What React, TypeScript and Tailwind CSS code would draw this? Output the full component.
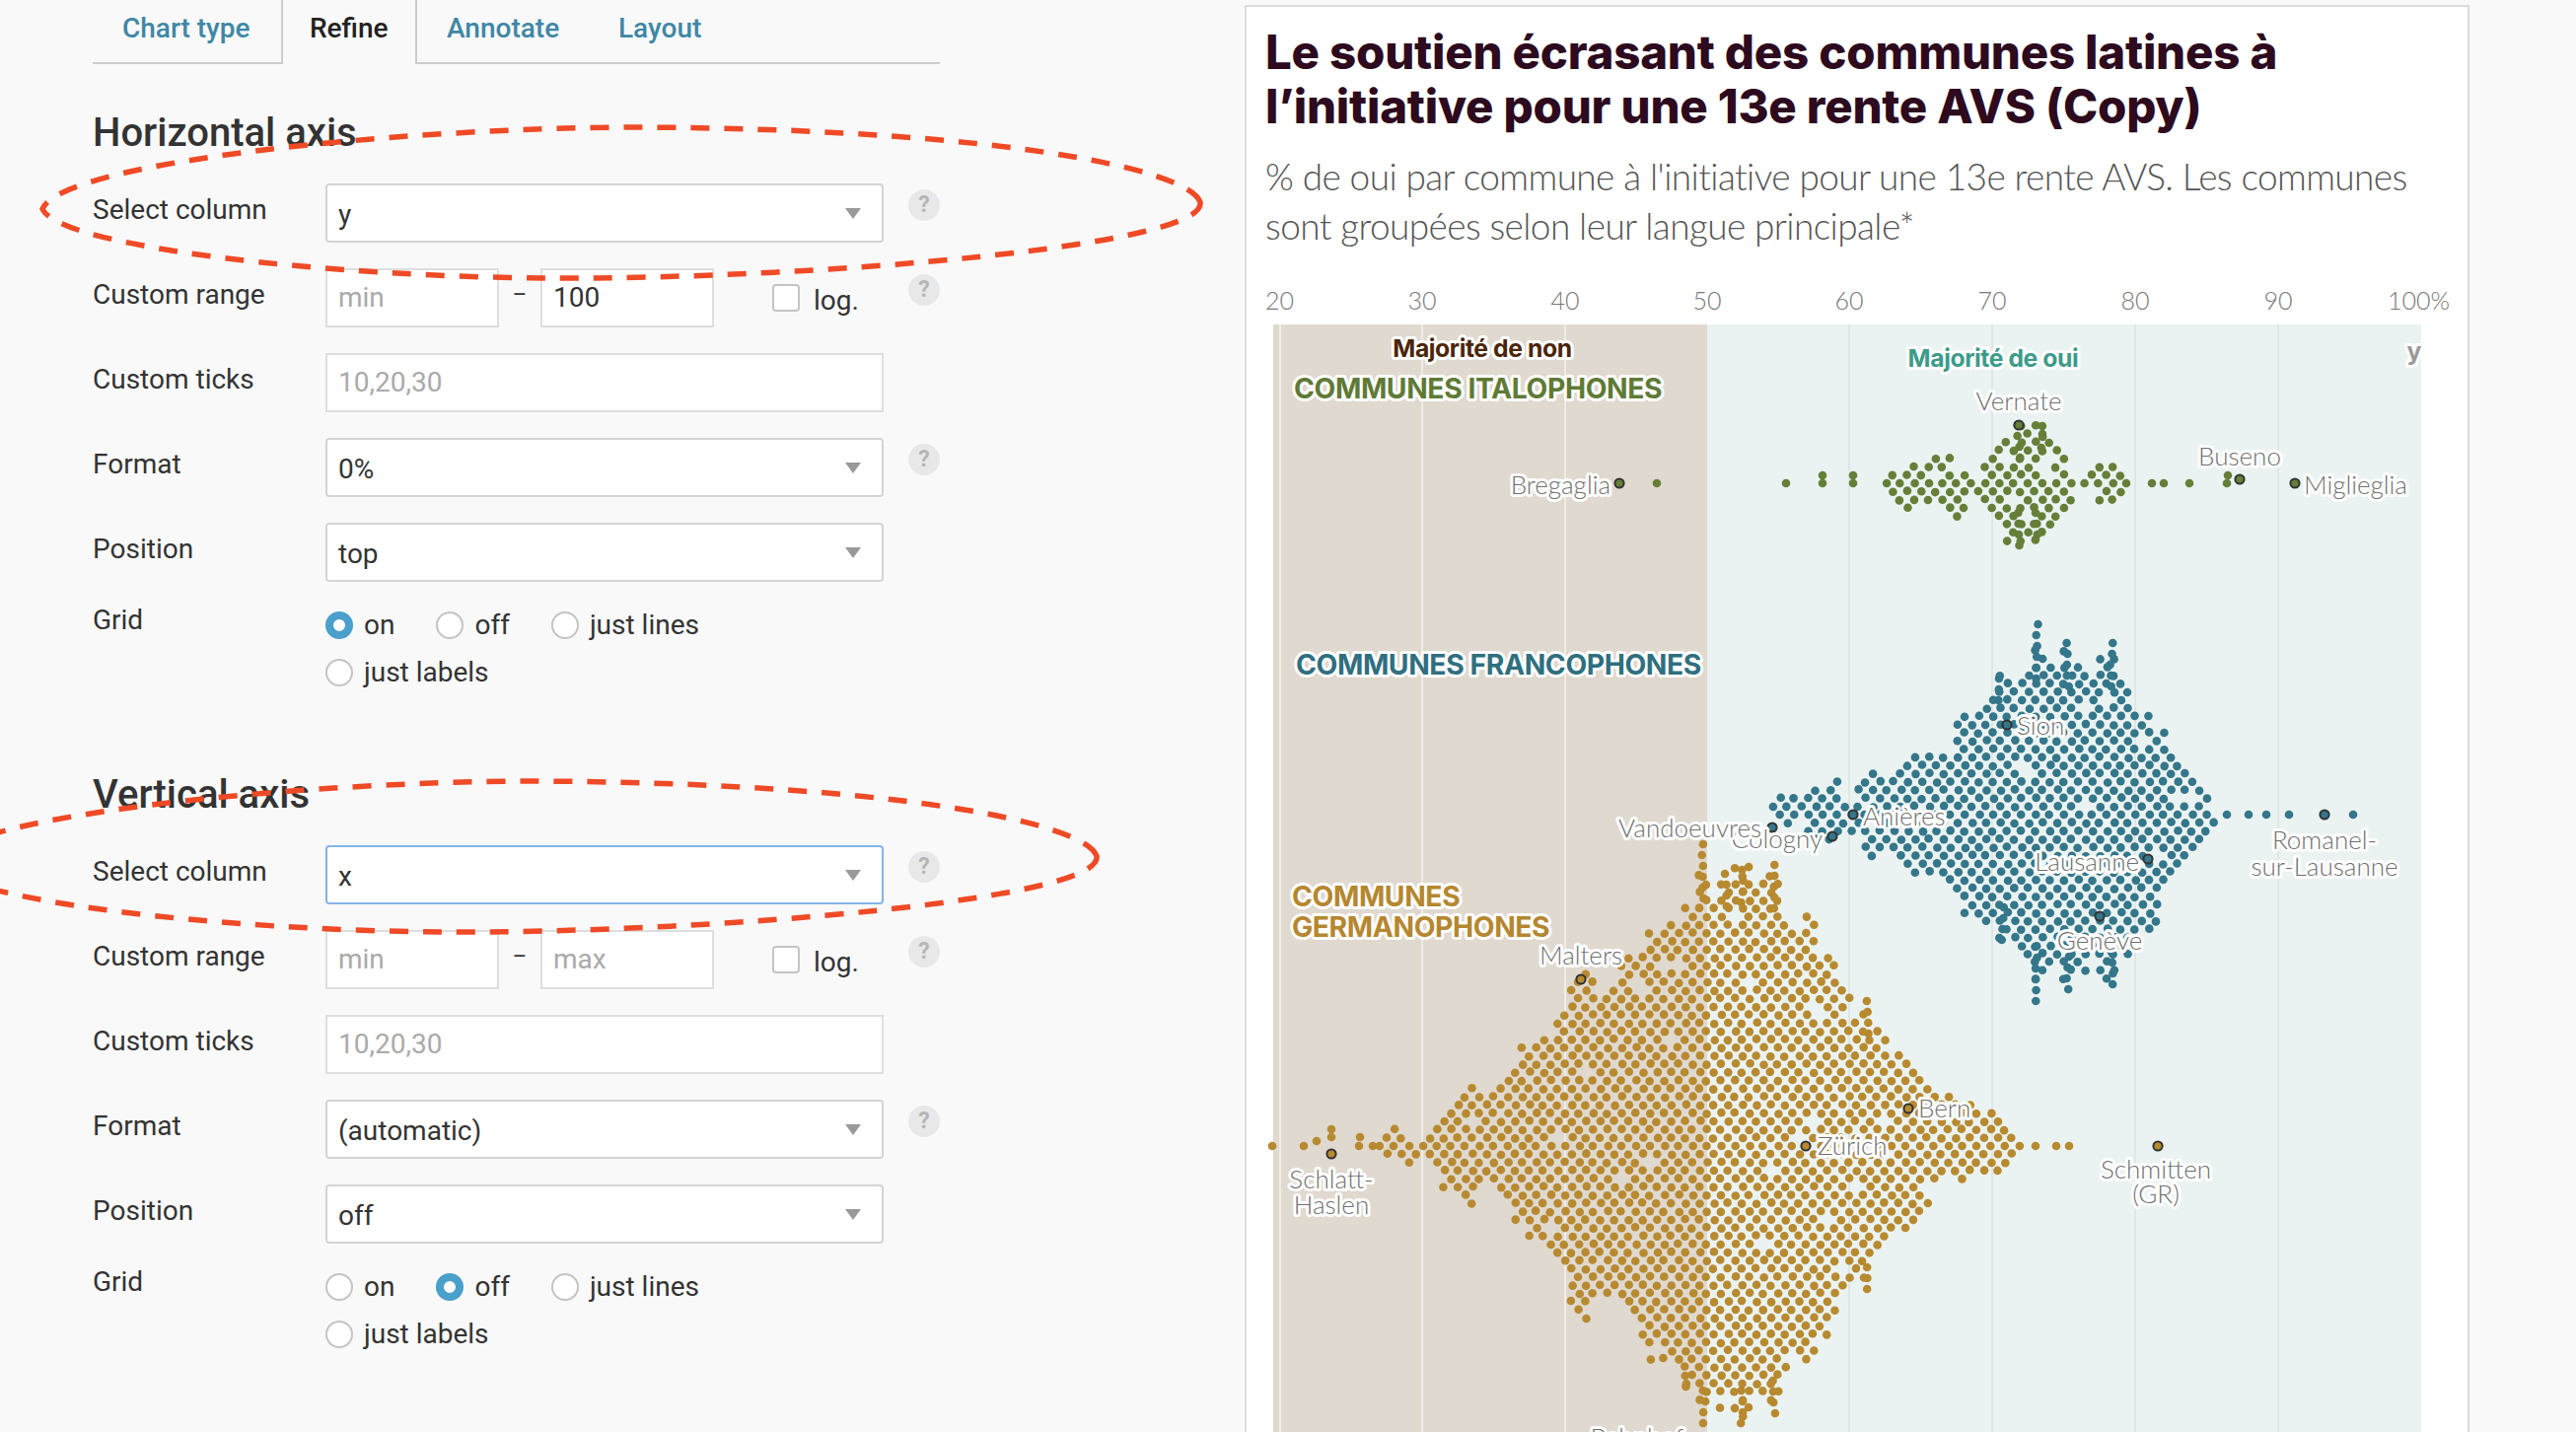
import React from 'react';

const ROW_H = 8.3;
const COL_W = 14.4;

type Pt = [number, number];
type Strand = [number, number, number]; // x, first y, last y
type Group = { cy: number; color: string; top: Pt[]; bottom: Pt[]; singles: Pt[]; strands: Strand[]; drop: number; seed: number };

// silhouette of each swarm, read off the picture: [x, y] along the upper and lower edge
const GROUPS: Group[] = [
  {
    cy: 490, color: '#667f38', seed: 3, drop: 0.12,
    top: [[1908, 490], [1932, 475], [1969, 460], [1989, 465], [1999, 488], [2017, 460], [2037, 450], [2047, 436], [2070, 432], [2089, 451], [2097, 473], [2108, 490], [2121, 473], [2151, 471], [2157, 488]],
    bottom: [[1908, 490], [1928, 516], [1960, 510], [1989, 524], [1999, 492], [2020, 530], [2047, 557], [2065, 545], [2089, 527], [2097, 510], [2108, 490], [2121, 505], [2140, 510], [2157, 492]],
    singles: [[1680, 490], [1811, 490], [1848, 482], [1848, 490], [1879, 482], [1879, 490], [2182, 490], [2194, 490], [2220, 490], [2258, 490], [2259, 482]],
    strands: [[2047, 431, 470], [2070, 432, 462], [2047, 520, 557], [2065, 520, 545]],
  },
  {
    cy: 826, color: '#34768a', seed: 11, drop: 0.02,
    top: [[1796, 826], [1798, 808], [1818, 810], [1840, 800], [1859, 786], [1878, 815], [1896, 776], [1915, 795], [1940, 763], [1965, 770], [1997, 718], [2012, 730], [2027, 688], [2050, 690], [2065, 660], [2080, 680], [2097, 670], [2118, 680], [2141, 670], [2147, 681], [2157, 701], [2172, 730], [2190, 720], [2195, 750], [2211, 778], [2228, 798], [2236, 806], [2248, 826]],
    bottom: [[1796, 826], [1798, 833], [1830, 845], [1859, 860], [1878, 840], [1896, 866], [1915, 860], [1936, 888], [1965, 888], [1980, 900], [1997, 935], [2012, 925], [2031, 945], [2050, 950], [2065, 985], [2080, 970], [2097, 985], [2118, 975], [2141, 985], [2149, 973], [2165, 950], [2188, 936], [2192, 905], [2211, 881], [2220, 860], [2240, 841], [2248, 826]],
    singles: [[2258, 826], [2280, 826], [2298, 826], [2321, 826], [2386, 826]],
    strands: [[2065, 633, 690], [2097, 652, 700], [2141, 652, 700], [2065, 960, 1022], [2097, 970, 1003], [2141, 965, 1003], [2031, 920, 958], [2027, 688, 720]],
  },
  {
    cy: 1162, color: '#b88a30', seed: 23, drop: 0.02,
    top: [[1396, 1162], [1407, 1147], [1422, 1140], [1434, 1155], [1445, 1162], [1459, 1135], [1474, 1117], [1499, 1100], [1518, 1115], [1535, 1070], [1571, 1047], [1587, 1020], [1599, 1000], [1630, 1010], [1669, 947], [1691, 940], [1709, 925], [1727, 900], [1738, 905], [1750, 900], [1766, 900], [1782, 905], [1799, 900], [1810, 925], [1822, 933], [1860, 985], [1880, 1030], [1894, 1040], [1902, 1040], [1917, 1070], [1942, 1078], [1952, 1095], [1977, 1115], [2011, 1123], [2021, 1130], [2041, 1147], [2049, 1155], [2052, 1162]],
    bottom: [[1396, 1162], [1415, 1175], [1428, 1183], [1440, 1170], [1451, 1183], [1469, 1208], [1490, 1221], [1510, 1195], [1531, 1220], [1535, 1246], [1559, 1256], [1571, 1266], [1585, 1276], [1588, 1303], [1601, 1331], [1620, 1308], [1650, 1316], [1654, 1336], [1664, 1351], [1669, 1375], [1692, 1378], [1709, 1400], [1728, 1420], [1745, 1420], [1766, 1420], [1785, 1405], [1799, 1410], [1810, 1390], [1827, 1375], [1858, 1340], [1867, 1305], [1880, 1295], [1894, 1285], [1902, 1270], [1917, 1253], [1941, 1241], [1952, 1236], [1952, 1220], [1969, 1200], [2011, 1191], [2037, 1183], [2043, 1175], [2052, 1162]],
    singles: [[1290, 1162], [1322, 1162], [1335, 1157], [1350, 1145], [1350, 1153], [1378, 1162], [1379, 1153], [1392, 1162], [2064, 1162], [2085, 1162], [2098, 1162]],
    strands: [[1727, 856, 920], [1799, 877, 930], [1766, 882, 920], [1750, 886, 920], [1894, 1015, 1050], [1894, 1285, 1310], [1709, 1395, 1415], [1728, 1410, 1452], [1766, 1410, 1445], [1799, 1400, 1436]],
  },
];

const MARKED: { x: number; y: number; color: string }[] = [
  { x: 2047, y: 431, color: '#667f38' },
  { x: 1642, y: 490, color: '#667f38' },
  { x: 2271, y: 486, color: '#667f38' },
  { x: 2327, y: 490, color: '#667f38' },
  { x: 2035, y: 735, color: '#34768a' },
  { x: 1879, y: 826, color: '#34768a' },
  { x: 1797, y: 839, color: '#34768a' },
  { x: 1858, y: 848, color: '#34768a' },
  { x: 2178, y: 871, color: '#34768a' },
  { x: 2129, y: 929, color: '#34768a' },
  { x: 2357, y: 826, color: '#34768a' },
  { x: 1603, y: 993, color: '#b88a30' },
  { x: 1350, y: 1170, color: '#b88a30' },
  { x: 1935, y: 1124, color: '#b88a30' },
  { x: 1831, y: 1162, color: '#b88a30' },
  { x: 2188, y: 1162, color: '#b88a30' },
];

function edgeAt(points: Pt[], x: number) {
  for (let i = 0; i < points.length - 1; i++) {
    const [x0, y0] = points[i];
    const [x1, y1] = points[i + 1];
    if (x >= x0 && x <= x1) return y0 + ((y1 - y0) * (x - x0)) / (x1 - x0 || 1);
  }
  return null;
}

function noise(a: number, b: number) {
  const v = Math.sin(a * 12.9898 + b * 78.233) * 43758.5453;
  return v - Math.floor(v);
}

function swarmDots(g: Group) {
  const dots: Pt[] = [...g.singles];
  for (let r = -70; r <= 70; r++) {
    const y = g.cy + r * ROW_H;
    const odd = Math.abs(r) % 2 === 1;
    for (let c = 0; c < 70; c++) {
      const x = 1290 + g.seed + (odd ? COL_W / 2 : 0) + c * COL_W;
      const top = edgeAt(g.top, x);
      const bottom = edgeAt(g.bottom, x);
      if (top === null || bottom === null) continue;
      // uneven column heights give the spiky outline
      const reach = 0.96 + 0.14 * noise(c * 2 + (odd ? 1 : 0), g.seed);
      if (y < g.cy - (g.cy - top) * reach - 1 || y > g.cy + (bottom - g.cy) * reach + 1) continue;
      if (r !== 0 && noise(r * 3 + g.seed, c * 7) < g.drop) continue;
      const jx = (noise(r + g.seed, c) - 0.5) * 2;
      const jy = r === 0 ? 0 : (noise(c + g.seed, r) - 0.5) * 1.6;
      dots.push([x + jx, y + jy]);
    }
  }
  g.strands.forEach(([x, y0, y1], s) => {
    for (let y = y0; y <= y1; y += 11) dots.push([x + (noise(y, s) - 0.5) * 3, y]);
  });
  return dots;
}

const TICKS = [
  { label: '30', x: 1442 }, { label: '40', x: 1587 }, { label: '50', x: 1731 }, { label: '60', x: 1875 },
  { label: '70', x: 2020 }, { label: '80', x: 2165 }, { label: '90', x: 2310 },
];

const halo = 'stroke-white [stroke-width:6px] [paint-order:stroke] [stroke-linejoin:round]';
const noteText = `[font-family:Lato,sans-serif] font-light text-[26px] fill-[#6f6f6f] ${halo}`;
const groupText = `[font-family:Inter,sans-serif] font-bold text-[28.3px] tracking-[-0.4px] ${halo}`;
const majorityText = `[font-family:Inter,sans-serif] font-bold text-[24.7px] tracking-[-0.4px] ${halo}`;

function Note({ x, y, anchor = 'middle', children }: { x: number; y: number; anchor?: 'start' | 'middle' | 'end'; children: React.ReactNode }) {
  return <text x={x} y={y + 9} textAnchor={anchor} className={noteText}>{children}</text>;
}

function Swarm() {
  return (
    <svg viewBox="1264 280 1238 1172" className="block w-[1238px] h-[1172px]">
      <rect x={1291} y={329} width={440} height={1130} fill="#e0d9d0" />
      <rect x={1731} y={329} width={724} height={1130} fill="#ebf3f2" />
      {[1298, 1442, 1587].map((x) => <line key={x} x1={x} x2={x} y1={329} y2={1452} stroke="#f0ece6" strokeWidth={2} />)}
      {[1875, 2020, 2165, 2310].map((x) => <line key={x} x1={x} x2={x} y1={329} y2={1452} stroke="#e0e6e6" strokeWidth={2} />)}

      <g className="[font-family:Lato,sans-serif] font-light text-[25px] fill-[#777]">
        <text x={1283} y={314}>20</text>
        {TICKS.map((t) => <text key={t.label} x={t.x} y={314} textAnchor="middle">{t.label}</text>)}
        <text x={2484} y={314} textAnchor="end">100%</text>
      </g>

      {GROUPS.map((g) => (
        <g key={g.cy} fill={g.color}>
          {swarmDots(g).map(([x, y], i) => <circle key={i} cx={x} cy={y} r={4.3} />)}
        </g>
      ))}
      {MARKED.map((m) => <circle key={`${m.x}-${m.y}`} cx={m.x} cy={m.y} r={4.6} fill={m.color} stroke="#333" strokeWidth={2} />)}

      <text x={1503} y={362} textAnchor="middle" className={`${majorityText} fill-[#4b2508]`}>Majorité de non</text>
      <text x={2021} y={372} textAnchor="middle" className={`${majorityText} fill-[#3d9b8a]`}>Majorité de oui</text>
      <text x={2455} y={365} textAnchor="end" className={`${majorityText} fill-[#999]`}>y</text>

      <text x={1312} y={404} className={`${groupText} fill-[#5f7a36]`}>COMMUNES ITALOPHONES</text>
      <text x={1314} y={684} className={`${groupText} fill-[#2f6f80]`}>COMMUNES FRANCOPHONES</text>
      <text x={1310} y={919} className={`${groupText} fill-[#b5872f]`}>COMMUNES</text>
      <text x={1310} y={950} className={`${groupText} fill-[#b5872f]`}>GERMANOPHONES</text>

      <Note x={2047} y={407}>Vernate</Note>
      <Note x={1633} y={492} anchor="end">Bregaglia</Note>
      <Note x={2271} y={463}>Buseno</Note>
      <Note x={2336} y={492} anchor="start">Miglieglia</Note>
      <Note x={2045} y={736} anchor="start">Sion</Note>
      <Note x={1889} y={828} anchor="start">Anières</Note>
      <Note x={1848} y={851} anchor="end">Cologny</Note>
      <Note x={1786} y={840} anchor="end">Vandoeuvres</Note>
      <Note x={2169} y={874} anchor="end">Lausanne</Note>
      <Note x={2129} y={954}>Genève</Note>
      <Note x={2357} y={852}>Romanel-</Note>
      <Note x={2357} y={879}>sur-Lausanne</Note>
      <Note x={1603} y={969}>Malters</Note>
      <Note x={1350} y={1196}>Schlatt-</Note>
      <Note x={1350} y={1222}>Haslen</Note>
      <Note x={1945} y={1124} anchor="start">Bern</Note>
      <Note x={1843} y={1162} anchor="start">Zürich</Note>
      <Note x={2186} y={1186}>Schmitten</Note>
      <Note x={2186} y={1211}>(GR)</Note>
      <Note x={1660} y={1458}>Bahnhof</Note>
    </svg>
  );
}

function Help() {
  return (
    <span className="flex items-center justify-center w-[32px] h-[32px] rounded-full bg-[#e8e8e8] text-[#b5b5b5] text-[23px] font-bold">?</span>
  );
}

function Caret() {
  return <span className="w-0 h-0 border-x-[8px] border-x-transparent border-t-[11px] border-t-[#999]" />;
}

function Select({ value, focus }: { value: string; focus?: boolean }) {
  return (
    <div className={`flex items-center justify-between w-[566px] h-[60px] pl-[11px] pr-[21px] bg-white border-2 rounded-[4px] ${focus ? 'border-[#84b4e8]' : 'border-[#d4d4d4]'}`}>
      <span className="text-[28px] text-[#333] leading-none pt-[3px]">{value}</span>
      <Caret />
    </div>
  );
}

function Input({ value, placeholder, w }: { value?: string; placeholder?: string; w: string }) {
  return (
    <div className={`flex items-center h-[60px] pl-[11px] bg-white border-2 border-[#dedede] ${w}`}>
      <span className={`text-[28px] leading-none ${value ? 'text-[#333]' : 'text-[#aaa]'}`}>{value ?? placeholder}</span>
    </div>
  );
}

function Row({ label, help, children }: { label: string; help?: boolean; children: React.ReactNode }) {
  return (
    <div className="flex h-[60px] mb-[26px]">
      <div className="w-[236px] pt-[7px] text-[28px] leading-[40px] text-[#333]">{label}</div>
      <div className="w-[591px] flex">{children}</div>
      {help && <div className="pt-[6px]"><Help /></div>}
    </div>
  );
}

function Radio({ label, on }: { label: string; on?: boolean }) {
  return (
    <label className="flex items-center gap-[11px] h-[40px] mr-[42px]">
      <span className={`block w-[28px] h-[28px] rounded-full ${on ? 'border-[8px] border-[#4a9fcb] bg-white' : 'border-2 border-[#c4c4c4] bg-white'}`} />
      <span className="text-[28px] text-[#333]">{label}</span>
    </label>
  );
}

function RangeRow({ max }: { max?: string }) {
  return (
    <Row label="Custom range" help>
      <Input placeholder="min" w="w-[176px]" />
      <span className="w-[42px] text-center text-[22px] leading-[54px] text-[#333]">–</span>
      <Input value={max} placeholder="max" w="w-[176px]" />
      <div className="flex items-center ml-[59px] h-[60px] gap-[14px]">
        <span className="block w-[28px] h-[28px] rounded-[4px] border-2 border-[#c4c4c4] bg-white" />
        <span className="text-[28px] text-[#333] pt-[6px]">log.</span>
      </div>
    </Row>
  );
}

function Axis({ title, column, focus, max, format, position, grid }: {
  title: string; column: string; focus?: boolean; max?: string; format: string; position: string; grid: string;
}) {
  return (
    <section>
      <h2 className="text-[40px] leading-[46px] font-medium text-[#333] mb-[28px]">{title}</h2>
      <Row label="Select column" help><Select value={column} focus={focus} /></Row>
      <RangeRow max={max} />
      <Row label="Custom ticks"><Input placeholder="10,20,30" w="w-[566px]" /></Row>
      <Row label="Format" help><Select value={format} /></Row>
      <Row label="Position"><Select value={position} /></Row>
      <div className="flex">
        <div className="w-[236px] text-[28px] leading-[40px] text-[#333] -mt-[7px]">Grid</div>
        <div className="flex flex-wrap w-[480px] gap-y-[8px] -mt-[2px]">
          <Radio label="on" on={grid === 'on'} />
          <Radio label="off" on={grid === 'off'} />
          <Radio label="just lines" />
          <Radio label="just labels" />
        </div>
      </div>
    </section>
  );
}

function Tabs() {
  return (
    <div className="flex h-[65px] w-[859px] border-b-2 border-[#ccc] text-[28px] font-medium">
      <a className="pl-[30px] w-[191px] leading-[58px] text-[#3f87a6]">Chart type</a>
      <a className="w-[138px] h-[65px] pl-[27px] leading-[58px] text-[#222] bg-[#f9f9f9] border-x-2 border-[#ccc]">Refine</a>
      <a className="ml-[30px] w-[174px] leading-[58px] text-[#3f87a6]">Annotate</a>
      <a className="leading-[58px] text-[#3f87a6]">Layout</a>
    </div>
  );
}

const LOOP = 'M1217 205 C1205 170 1000 130 640 129 C400 130 60 165 43 212 C60 250 330 281 560 282 C820 283 1225 250 1217 205 Z';

export default function App() {
  return (
    <div className="relative flex w-[2612px] h-[1452px] overflow-hidden bg-[#f9f9f9] [font-family:Roboto,sans-serif]">
      <div className="w-[1262px] shrink-0 pl-[94px]">
        <Tabs />
        <div className="pt-[47px]"><Axis title="Horizontal axis" column="y" max="100" format="0%" position="top" grid="on" /></div>
        <div className="pt-[81px]"><Axis title="Vertical axis" column="x" focus format="(automatic)" position="off" grid="off" /></div>
      </div>

      <div className="w-[1242px] h-[1500px] mt-[5px] bg-white border-2 border-[#dcdcdc]">
        <div className="h-[273px] pl-[19px] pt-[18px]">
          <h1 className="text-[47.4px] leading-[55px] font-extrabold tracking-[-0.2px] text-[#2d0a1e] [font-family:Inter,sans-serif]">
            Le soutien écrasant des communes latines à<br />l’initiative pour une 13e rente AVS (Copy)
          </h1>
          <p className="mt-[19px] text-[37px] leading-[50px] font-light tracking-[-0.6px] text-[#555] [font-family:Lato,sans-serif]">
            % de oui par commune à l'initiative pour une 13e rente AVS. Les communes<br />sont groupées selon leur langue principale*
          </p>
        </div>
        <Swarm />
      </div>

      {/* hand drawn marks over the form */}
      <svg viewBox="0 0 2612 1452" className="absolute inset-0 w-[2612px] h-[1452px] pointer-events-none">
        <g fill="none" stroke="#ef4a26" strokeWidth={5.5} strokeDasharray="19 15">
          <path d={LOOP} />
          <path d={LOOP} transform="translate(-105 663)" />
        </g>
      </svg>
    </div>
  );
}
